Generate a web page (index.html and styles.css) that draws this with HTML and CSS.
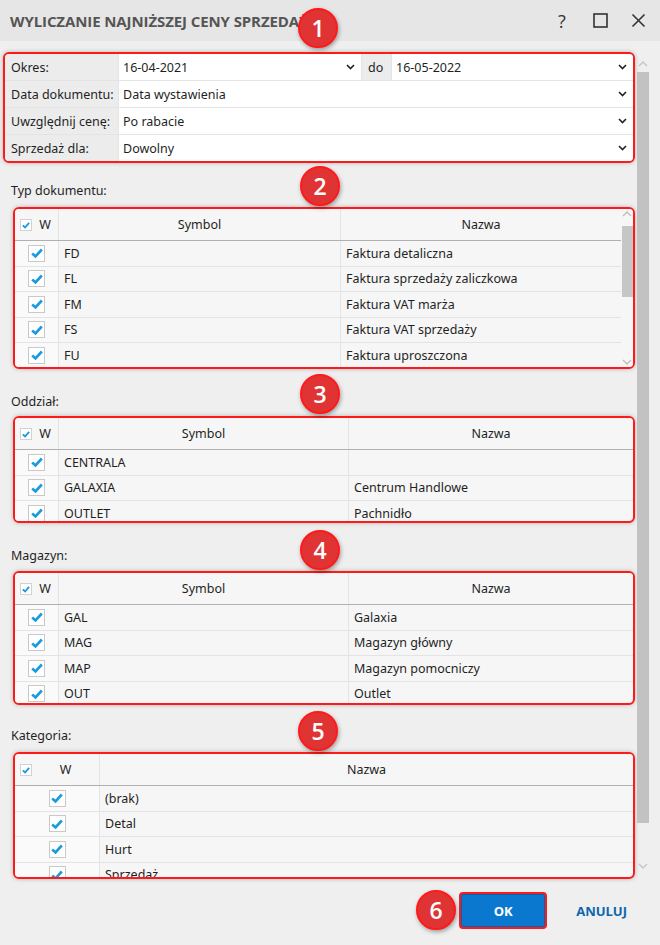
FILE: index.html
```html
<!DOCTYPE html>
<html lang="pl">
<head>
<meta charset="utf-8">
<title>Wyliczanie najniższej ceny sprzedaży</title>
<link rel="stylesheet" href="styles.css">
</head>
<body>
<div class="dialog">
  <header class="titlebar">
    <h1 class="title">WYLICZANIE NAJNIŻSZEJ CENY SPRZEDAŻY</h1>
    <div class="win-btns">
      <span class="win-btn help">?</span>
      <span class="win-btn"><svg width="15" height="15" viewBox="0 0 15 15"><rect x="1" y="1" width="13" height="13" fill="none" stroke="#333" stroke-width="1.6"/></svg></span>
      <span class="win-btn"><svg width="15" height="15" viewBox="0 0 15 15"><path d="M1.5 1.5 L13.5 13.5 M13.5 1.5 L1.5 13.5" stroke="#333" stroke-width="1.6" fill="none"/></svg></span>
    </div>
  </header>

  <div class="main">
    <div class="content">
      <section class="params mark">
        <div class="prow">
          <div class="plabel">Okres:</div>
          <div class="pinput short"><span>16-04-2021</span><svg class="chev" width="9" height="6" viewBox="0 0 9 6"><path d="M1 1 L4.5 4.5 L8 1" fill="none" stroke="#222" stroke-width="1.6"/></svg></div>
          <div class="pdo">do</div>
          <div class="pinput"><span>16-05-2022</span><svg class="chev" width="9" height="6" viewBox="0 0 9 6"><path d="M1 1 L4.5 4.5 L8 1" fill="none" stroke="#222" stroke-width="1.6"/></svg></div>
        </div>
        <div class="prow">
          <div class="plabel">Data dokumentu:</div>
          <div class="pinput"><span>Data wystawienia</span><svg class="chev" width="9" height="6" viewBox="0 0 9 6"><path d="M1 1 L4.5 4.5 L8 1" fill="none" stroke="#222" stroke-width="1.6"/></svg></div>
        </div>
        <div class="prow">
          <div class="plabel">Uwzględnij cenę:</div>
          <div class="pinput"><span>Po rabacie</span><svg class="chev" width="9" height="6" viewBox="0 0 9 6"><path d="M1 1 L4.5 4.5 L8 1" fill="none" stroke="#222" stroke-width="1.6"/></svg></div>
        </div>
        <div class="prow">
          <div class="plabel">Sprzedaż dla:</div>
          <div class="pinput"><span>Dowolny</span><svg class="chev" width="9" height="6" viewBox="0 0 9 6"><path d="M1 1 L4.5 4.5 L8 1" fill="none" stroke="#222" stroke-width="1.6"/></svg></div>
        </div>
      </section>

      <div class="sec-label l-doc">Typ dokumentu:</div>
      <section class="grid mark g-doc">
        <div class="grid-main">
          <div class="ghead cols-doc">
            <div class="c cw"><span class="hcb"><svg width="10" height="10" viewBox="0 0 16 16"><path d="M3 8.5 L6.5 12 L13 4.5" fill="none" stroke="#1a9be0" stroke-width="3"/></svg></span><span class="wtxt">W</span></div>
            <div class="c ch">Symbol</div>
            <div class="c ch">Nazwa</div>
          </div>
          <div class="gbody">
            <div class="grow cols-doc"><div class="c cb"><span class="cbx"><svg width="14" height="14" viewBox="0 0 16 16"><path d="M2.5 8.5 L6.3 12 L13.5 4" fill="none" stroke="#1a9be0" stroke-width="3"/></svg></span></div><div class="c">FD</div><div class="c">Faktura detaliczna</div></div>
            <div class="grow cols-doc"><div class="c cb"><span class="cbx"><svg width="14" height="14" viewBox="0 0 16 16"><path d="M2.5 8.5 L6.3 12 L13.5 4" fill="none" stroke="#1a9be0" stroke-width="3"/></svg></span></div><div class="c">FL</div><div class="c">Faktura sprzedaży zaliczkowa</div></div>
            <div class="grow cols-doc"><div class="c cb"><span class="cbx"><svg width="14" height="14" viewBox="0 0 16 16"><path d="M2.5 8.5 L6.3 12 L13.5 4" fill="none" stroke="#1a9be0" stroke-width="3"/></svg></span></div><div class="c">FM</div><div class="c">Faktura VAT marża</div></div>
            <div class="grow cols-doc"><div class="c cb"><span class="cbx"><svg width="14" height="14" viewBox="0 0 16 16"><path d="M2.5 8.5 L6.3 12 L13.5 4" fill="none" stroke="#1a9be0" stroke-width="3"/></svg></span></div><div class="c">FS</div><div class="c">Faktura VAT sprzedaży</div></div>
            <div class="grow cols-doc"><div class="c cb"><span class="cbx"><svg width="14" height="14" viewBox="0 0 16 16"><path d="M2.5 8.5 L6.3 12 L13.5 4" fill="none" stroke="#1a9be0" stroke-width="3"/></svg></span></div><div class="c">FU</div><div class="c">Faktura uproszczona</div></div>
          </div>
        </div>
        <div class="gscroll">
          <svg class="sarrow" width="10" height="6" viewBox="0 0 10 6"><path d="M1 5 L5 1 L9 5" fill="none" stroke="#bdbdbd" stroke-width="1.3"/></svg>
          <div class="gthumb"></div>
          <svg class="sarrow down" width="10" height="6" viewBox="0 0 10 6"><path d="M1 1 L5 5 L9 1" fill="none" stroke="#bdbdbd" stroke-width="1.3"/></svg>
        </div>
      </section>

      <div class="sec-label l-odd">Oddział:</div>
      <section class="grid mark g-odd">
        <div class="grid-main">
          <div class="ghead cols-sym">
            <div class="c cw"><span class="hcb"><svg width="10" height="10" viewBox="0 0 16 16"><path d="M3 8.5 L6.5 12 L13 4.5" fill="none" stroke="#1a9be0" stroke-width="3"/></svg></span><span class="wtxt">W</span></div>
            <div class="c ch">Symbol</div>
            <div class="c ch">Nazwa</div>
          </div>
          <div class="gbody">
            <div class="grow cols-sym"><div class="c cb"><span class="cbx"><svg width="14" height="14" viewBox="0 0 16 16"><path d="M2.5 8.5 L6.3 12 L13.5 4" fill="none" stroke="#1a9be0" stroke-width="3"/></svg></span></div><div class="c">CENTRALA</div><div class="c"></div></div>
            <div class="grow cols-sym"><div class="c cb"><span class="cbx"><svg width="14" height="14" viewBox="0 0 16 16"><path d="M2.5 8.5 L6.3 12 L13.5 4" fill="none" stroke="#1a9be0" stroke-width="3"/></svg></span></div><div class="c">GALAXIA</div><div class="c">Centrum Handlowe</div></div>
            <div class="grow cols-sym"><div class="c cb"><span class="cbx"><svg width="14" height="14" viewBox="0 0 16 16"><path d="M2.5 8.5 L6.3 12 L13.5 4" fill="none" stroke="#1a9be0" stroke-width="3"/></svg></span></div><div class="c">OUTLET</div><div class="c">Pachnidło</div></div>
          </div>
        </div>
      </section>

      <div class="sec-label l-mag">Magazyn:</div>
      <section class="grid mark g-mag">
        <div class="grid-main">
          <div class="ghead cols-sym">
            <div class="c cw"><span class="hcb"><svg width="10" height="10" viewBox="0 0 16 16"><path d="M3 8.5 L6.5 12 L13 4.5" fill="none" stroke="#1a9be0" stroke-width="3"/></svg></span><span class="wtxt">W</span></div>
            <div class="c ch">Symbol</div>
            <div class="c ch">Nazwa</div>
          </div>
          <div class="gbody">
            <div class="grow cols-sym"><div class="c cb"><span class="cbx"><svg width="14" height="14" viewBox="0 0 16 16"><path d="M2.5 8.5 L6.3 12 L13.5 4" fill="none" stroke="#1a9be0" stroke-width="3"/></svg></span></div><div class="c">GAL</div><div class="c">Galaxia</div></div>
            <div class="grow cols-sym"><div class="c cb"><span class="cbx"><svg width="14" height="14" viewBox="0 0 16 16"><path d="M2.5 8.5 L6.3 12 L13.5 4" fill="none" stroke="#1a9be0" stroke-width="3"/></svg></span></div><div class="c">MAG</div><div class="c">Magazyn główny</div></div>
            <div class="grow cols-sym"><div class="c cb"><span class="cbx"><svg width="14" height="14" viewBox="0 0 16 16"><path d="M2.5 8.5 L6.3 12 L13.5 4" fill="none" stroke="#1a9be0" stroke-width="3"/></svg></span></div><div class="c">MAP</div><div class="c">Magazyn pomocniczy</div></div>
            <div class="grow cols-sym"><div class="c cb"><span class="cbx"><svg width="14" height="14" viewBox="0 0 16 16"><path d="M2.5 8.5 L6.3 12 L13.5 4" fill="none" stroke="#1a9be0" stroke-width="3"/></svg></span></div><div class="c">OUT</div><div class="c">Outlet</div></div>
          </div>
        </div>
      </section>

      <div class="sec-label l-kat">Kategoria:</div>
      <section class="grid mark g-kat">
        <div class="grid-main">
          <div class="ghead cols-kat">
            <div class="c cw"><span class="hcb"><svg width="10" height="10" viewBox="0 0 16 16"><path d="M3 8.5 L6.5 12 L13 4.5" fill="none" stroke="#1a9be0" stroke-width="3"/></svg></span><span class="wtxt">W</span></div>
            <div class="c ch">Nazwa</div>
          </div>
          <div class="gbody">
            <div class="grow cols-kat"><div class="c cb"><span class="cbx"><svg width="14" height="14" viewBox="0 0 16 16"><path d="M2.5 8.5 L6.3 12 L13.5 4" fill="none" stroke="#1a9be0" stroke-width="3"/></svg></span></div><div class="c">(brak)</div></div>
            <div class="grow cols-kat"><div class="c cb"><span class="cbx"><svg width="14" height="14" viewBox="0 0 16 16"><path d="M2.5 8.5 L6.3 12 L13.5 4" fill="none" stroke="#1a9be0" stroke-width="3"/></svg></span></div><div class="c">Detal</div></div>
            <div class="grow cols-kat"><div class="c cb"><span class="cbx"><svg width="14" height="14" viewBox="0 0 16 16"><path d="M2.5 8.5 L6.3 12 L13.5 4" fill="none" stroke="#1a9be0" stroke-width="3"/></svg></span></div><div class="c">Hurt</div></div>
            <div class="grow cols-kat"><div class="c cb"><span class="cbx"><svg width="14" height="14" viewBox="0 0 16 16"><path d="M2.5 8.5 L6.3 12 L13.5 4" fill="none" stroke="#1a9be0" stroke-width="3"/></svg></span></div><div class="c">Sprzedaż</div></div>
          </div>
        </div>
      </section>
    </div>

    <div class="vscroll">
      <svg class="sarrow" width="10" height="6" viewBox="0 0 10 6"><path d="M1 5 L5 1 L9 5" fill="none" stroke="#c4c4c4" stroke-width="1.3"/></svg>
      <div class="vthumb"></div>
      <svg class="sarrow vdown" width="10" height="6" viewBox="0 0 10 6"><path d="M1 1 L5 5 L9 1" fill="none" stroke="#c4c4c4" stroke-width="1.3"/></svg>
    </div>
  </div>

  <footer class="footer">
    <button class="btn-ok" type="button">OK</button>
    <button class="btn-cancel" type="button">ANULUJ</button>
  </footer>

  <span class="badge b1">1</span>
  <span class="badge b2">2</span>
  <span class="badge b3">3</span>
  <span class="badge b4">4</span>
  <span class="badge b5">5</span>
  <span class="badge b6">6</span>
</div>
</body>
</html>
```

FILE: styles.css
```css
* { box-sizing: border-box; margin: 0; padding: 0; }
html, body { width: 660px; height: 945px; overflow: hidden; }
body {
  font-family: "Noto Sans", "DejaVu Sans", sans-serif;
  font-size: 12.5px;
  color: #1f1f1f;
  background: #efefef;
}
.dialog {
  position: relative;
  width: 660px;
  height: 945px;
  display: flex;
  flex-direction: column;
  background: #efefef;
}

/* title bar */
.titlebar {
  height: 41px;
  flex: none;
  display: flex;
  align-items: center;
  background: #e6e6e6;
  padding: 0 3px 0 10px;
}
.title {
  flex: 1;
  font-family: "Open Sans", "Noto Sans", sans-serif;
  font-weight: 700;
  font-size: 15px;
  color: #555;
  letter-spacing: -0.1px;
  white-space: nowrap;
}
.win-btns { display: flex; align-items: center; }
.win-btn {
  width: 38px;
  height: 24px;
  display: flex;
  align-items: center;
  justify-content: center;
  color: #333;
}
.help { font-family: "Open Sans", sans-serif; font-size: 18px; }

/* main area */
.main { display: flex; height: 841px; flex: none; }
.content { width: 637px; padding-top: 11px; flex: none; }
.vscroll {
  width: 12px;
  flex: none;
  display: flex;
  flex-direction: column;
  align-items: center;
  padding-top: 20px;
}
.vthumb { width: 12px; height: 751px; margin-top: 5px; background: #c2c2c2; }
.vdown { margin-top: 40px; }
.sarrow { display: block; flex: none; }

/* annotation frame */
.mark {
  border: 2px solid #ff1a1a;
  border-radius: 6px;
  box-shadow: 0 0 4px rgba(0, 0, 0, 0.25);
  overflow: hidden;
}

/* parameters */
.params {
  margin: 0 2px 0 3px;
  display: flex;
  flex-direction: column;
  gap: 1px;
  background: #e4e4e4;
}
.prow { display: flex; height: 26px; gap: 1px; }
.plabel {
  width: 113px;
  flex: none;
  background: #ececec;
  padding-left: 6px;
  display: flex;
  align-items: center;
  white-space: nowrap;
}
.pinput {
  flex: 1;
  background: #fff;
  display: flex;
  align-items: center;
  justify-content: space-between;
  padding: 0 6px 0 4px;
  white-space: nowrap;
}
.pinput.short { flex: none; width: 242px; }
.pdo {
  width: 29px;
  flex: none;
  background: #ececec;
  padding-left: 6px;
  display: flex;
  align-items: center;
}
.chev { flex: none; }

/* section labels */
.sec-label { height: 16px; line-height: 16px; padding-left: 11px; margin-bottom: 7px; }
.l-doc { margin-top: 20px; margin-bottom: 8px; }
.l-odd { margin-top: 25px; margin-bottom: 6px; }
.l-mag { margin-top: 25px; margin-bottom: 7px; }
.l-kat { margin-top: 23px; margin-bottom: 8px; }

/* grids */
.grid {
  margin: 0 2px 0 13px;
  display: flex;
  background: #f6f6f6;
}
.g-doc { height: 162px; }
.g-odd { height: 107px; }
.g-mag { height: 134px; }
.g-kat { height: 127px; }
.grid-main { flex: 1; min-width: 0; display: flex; flex-direction: column; }
.ghead, .grow { display: grid; }
.ghead {
  height: 32px;
  flex: none;
  border-bottom: 1px solid #b0b0b0;
  background: #f6f6f6;
}
.gbody { flex: 1; overflow: hidden; }
.grow { height: 25.5px; border-bottom: 1px solid #e3e3e3; }
.cols-doc { grid-template-columns: 44px 282px 1fr; }
.cols-sym { grid-template-columns: 44px 290px 1fr; }
.cols-kat { grid-template-columns: 85px 1fr; }

.c {
  display: flex;
  align-items: center;
  padding-left: 5px;
  border-right: 1px solid #e4e4e4;
  white-space: nowrap;
  overflow: hidden;
  color: #1f1f1f;
}
.c:last-child { border-right: none; }
.ch { justify-content: center; padding-left: 0; }
.cw { padding-left: 5px; }
.wtxt { flex: 1; text-align: center; }
.cb { justify-content: center; padding-left: 0; background: #fafafa; }

.hcb {
  width: 12px;
  height: 12px;
  flex: none;
  background: #fff;
  border: 1px solid #d2d2d2;
  display: flex;
  align-items: center;
  justify-content: center;
}
.cbx {
  width: 17px;
  height: 17px;
  flex: none;
  background: #fff;
  border: 1px solid #c9c9c9;
  display: flex;
  align-items: center;
  justify-content: center;
}

/* inner grid scrollbar */
.gscroll {
  width: 12px;
  flex: none;
  display: flex;
  flex-direction: column;
  align-items: center;
  padding-top: 2px;
  background: #f6f6f6;
}
.gthumb { width: 11px; height: 71px; margin-top: 9px; margin-left: 1px; background: #c6c6c6; }
.gscroll .down { margin-top: 62px; }

/* footer */
.footer {
  flex: 1;
  display: flex;
  justify-content: flex-end;
  align-items: flex-start;
  padding: 10px 33px 0 0;
}
.btn-ok {
  width: 88px;
  height: 37px;
  border: 2px solid #ff1a1a;
  border-radius: 4px;
  background: #0b78d0;
  box-shadow: inset 0 0 0 1px #0a62ad;
  color: #fff;
  font-family: "Open Sans", sans-serif;
  font-weight: 700;
  font-size: 13px;
}
.btn-cancel {
  margin-left: 29px;
  height: 37px;
  border: none;
  background: none;
  color: #0b67ad;
  font-family: "Open Sans", sans-serif;
  font-weight: 700;
  font-size: 13px;
}

/* annotation badges */
.badge {
  position: absolute;
  width: 40px;
  height: 40px;
  border-radius: 50%;
  background: #e03434;
  border: 2px solid #ff1a1a;
  color: #fff;
  font-family: "Open Sans", sans-serif;
  font-weight: 600;
  font-size: 23px;
  display: flex;
  align-items: center;
  justify-content: center;
  box-shadow: 1px 2px 4px rgba(0, 0, 0, 0.35);
}
.b1 { left: 298px; top: 8px; }
.b2 { left: 300px; top: 166px; }
.b3 { left: 300px; top: 374px; }
.b4 { left: 300px; top: 530px; }
.b5 { left: 298px; top: 711px; }
.b6 { left: 416px; top: 890px; }
```
